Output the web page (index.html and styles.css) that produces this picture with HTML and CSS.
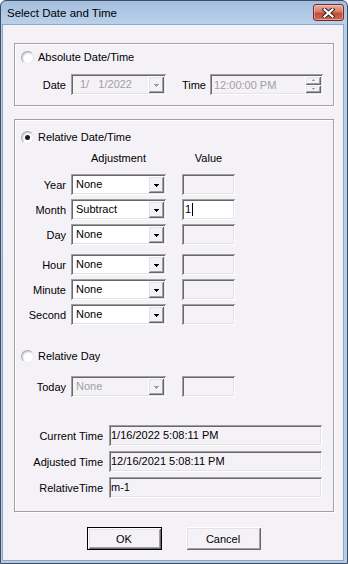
FILE: index.html
```html
<!DOCTYPE html>
<html lang="en">
<head>
    <meta charset="UTF-8">
    <meta name="viewport" content="width=device-width, initial-scale=1.0">
    <title>Select Date and Time</title>
    <link rel="stylesheet" href="styles.css">
</head>
<body>
    <div class="window">
        <div class="titlebar">
            <span class="title">Select Date and Time</span>
            <div class="close-btn">
                <svg width="13" height="10" viewBox="0 0 13 10">
                    <path d="M2.5 1.5 L10.5 8.5 M10.5 1.5 L2.5 8.5" stroke="#3a2020" stroke-width="4.2" stroke-linecap="square"/>
                    <path d="M2.5 1.5 L10.5 8.5 M10.5 1.5 L2.5 8.5" stroke="#fff" stroke-width="2.2" stroke-linecap="square"/>
                </svg>
            </div>
        </div>

        <div class="client">
            <div class="group group-absolute">
                <div class="radio-row abs-radio">
                    <span class="radio"></span>
                    <span>Absolute Date/Time</span>
                </div>
                <div class="row abs-row">
                    <span class="label">Date</span>
                    <div class="combo sunken disabled">
                        <span class="combo-text date-text">1/   1/2022</span>
                        <span class="drop-btn"><i class="arrow"></i></span>
                    </div>
                    <span class="label time-label">Time</span>
                    <div class="time-field sunken disabled">
                        <span class="time-text">12:00:00 PM</span>
                        <span class="spinner">
                            <span class="spin-btn"><i class="arrow small up"></i></span>
                            <span class="spin-btn"><i class="arrow small"></i></span>
                        </span>
                    </div>
                </div>
            </div>

            <div class="group group-relative">
                <div class="radio-row rel-radio">
                    <span class="radio checked"></span>
                    <span>Relative Date/Time</span>
                </div>

                <div class="header-row">
                    <span class="head-adjust">Adjustment</span>
                    <span class="head-value">Value</span>
                </div>

                <div class="row first-adjust">
                    <span class="label">Year</span>
                    <div class="combo sunken">
                        <span class="combo-text">None</span>
                        <span class="drop-btn"><i class="arrow"></i></span>
                    </div>
                    <div class="value sunken"></div>
                </div>
                <div class="row">
                    <span class="label">Month</span>
                    <div class="combo sunken">
                        <span class="combo-text">Subtract</span>
                        <span class="drop-btn"><i class="arrow"></i></span>
                    </div>
                    <div class="value sunken editable">1<span class="caret"></span></div>
                </div>
                <div class="row">
                    <span class="label">Day</span>
                    <div class="combo sunken">
                        <span class="combo-text">None</span>
                        <span class="drop-btn"><i class="arrow"></i></span>
                    </div>
                    <div class="value sunken"></div>
                </div>
                <div class="row time-break">
                    <span class="label">Hour</span>
                    <div class="combo sunken">
                        <span class="combo-text">None</span>
                        <span class="drop-btn"><i class="arrow"></i></span>
                    </div>
                    <div class="value sunken"></div>
                </div>
                <div class="row">
                    <span class="label">Minute</span>
                    <div class="combo sunken">
                        <span class="combo-text">None</span>
                        <span class="drop-btn"><i class="arrow"></i></span>
                    </div>
                    <div class="value sunken"></div>
                </div>
                <div class="row">
                    <span class="label">Second</span>
                    <div class="combo sunken">
                        <span class="combo-text">None</span>
                        <span class="drop-btn"><i class="arrow"></i></span>
                    </div>
                    <div class="value sunken"></div>
                </div>

                <div class="radio-row day-radio">
                    <span class="radio"></span>
                    <span>Relative Day</span>
                </div>
                <div class="row today-row">
                    <span class="label">Today</span>
                    <div class="combo sunken disabled">
                        <span class="combo-text">None</span>
                        <span class="drop-btn"><i class="arrow"></i></span>
                    </div>
                    <div class="value sunken"></div>
                </div>

                <div class="row info-row first-info">
                    <span class="label info-label">Current Time</span>
                    <div class="info sunken">1/16/2022 5:08:11 PM</div>
                </div>
                <div class="row info-row">
                    <span class="label info-label">Adjusted Time</span>
                    <div class="info sunken">12/16/2021 5:08:11 PM</div>
                </div>
                <div class="row info-row">
                    <span class="label info-label">RelativeTime</span>
                    <div class="info sunken">m-1</div>
                </div>
            </div>

            <div class="buttons">
                <div class="btn default">OK</div>
                <div class="btn">Cancel</div>
            </div>
        </div>
    </div>
</body>
</html>
```

FILE: styles.css
```css
:root {
    --face: #f5f2f7;
    --shadow: #a0a0a0;
    --dark-shadow: #696969;
    --light: #e3e3e3;
    --gray-text: #a0a0a0;
}

* {
    box-sizing: border-box;
}

body {
    margin: 0;
    font-family: "Liberation Sans", Arial, sans-serif;
    font-size: 11px;
    color: #000;
}

/* window frame */

.window {
    width: 348px;
    height: 564px;
    border: 1px solid #3c4d63;
    border-radius: 6px 6px 0 0;
    background: linear-gradient(#a3bede, #b9d0ea 22px, #b4cce8);
    padding: 0 3px 2px 1px;
    display: flex;
    flex-direction: column;
}

.titlebar {
    height: 23px;
    flex-shrink: 0;
    display: flex;
    justify-content: space-between;
    align-items: flex-start;
}

.title {
    padding: 5px 0 0 5px;
    font-size: 11.5px;
    line-height: 14px;
    color: #000;
}

.close-btn {
    width: 31px;
    height: 17px;
    margin-top: 3px;
    border: 1px solid #6a2d27;
    border-radius: 3px;
    background: linear-gradient(#e9aea2, #d77b6c 45%, #c44a38 55%, #cf6b55);
    box-shadow: inset 0 0 0 1px rgba(255, 220, 210, 0.45);
    display: flex;
    align-items: center;
    justify-content: center;
}

.client {
    flex: 1;
    background: var(--face);
    border: 1px solid #8da7c6;
}

/* group boxes */

.group {
    width: 320px;
    margin-left: 11px;
    border: 1px solid var(--shadow);
    box-shadow: inset 1px 1px 0 #fff, 1px 1px 0 #fff;
}

.group-absolute {
    margin-top: 18px;
    height: 63px;
}

.group-relative {
    margin-top: 13px;
    height: 393px;
}

.radio-row {
    height: 14px;
    padding-left: 6px;
    display: flex;
    align-items: center;
    gap: 4px;
}

.abs-radio {
    margin-top: 6px;
}

.rel-radio {
    margin-top: 10px;
}

.day-radio {
    margin-top: 24px;
}

.radio {
    width: 13px;
    height: 13px;
    border-radius: 50%;
    border: 1px solid #a8a8a8;
    border-right-color: #e4e4e4;
    border-bottom-color: #ececec;
    background: radial-gradient(circle at 65% 65%, #fff 40%, #efefef);
    box-shadow: inset 1px 1px 1px #cfcfcf;
    display: flex;
    align-items: center;
    justify-content: center;
}

.radio.checked::after {
    content: "";
    width: 5px;
    height: 5px;
    border-radius: 50%;
    background: #1c1c1c;
}

/* rows */

.row {
    height: 21px;
    margin-top: 4px;
    display: flex;
    align-items: center;
}

.abs-row {
    margin-top: 10px;
}

.first-adjust {
    margin-top: 9px;
}

.time-break {
    margin-top: 9px;
}

.today-row {
    margin-top: 13px;
}

.label {
    width: 51px;
    margin-right: 5px;
    text-align: right;
    white-space: nowrap;
}

.time-label {
    width: 40px;
    margin-right: 4px;
}

.info-label {
    width: 88px;
    margin-right: 6px;
}

.header-row {
    height: 14px;
    margin-top: 7px;
    padding-left: 56px;
    display: flex;
    align-items: center;
}

.head-adjust {
    width: 95px;
    text-align: center;
}

.head-value {
    width: 53px;
    margin-left: 16px;
    text-align: center;
}

.first-info {
    margin-top: 28px;
}

.info-row + .info-row {
    margin-top: 5px;
}

/* 3d controls */

.sunken {
    height: 21px;
    padding: 2px;
    box-shadow:
        inset 1px 1px 0 var(--shadow),
        inset -1px -1px 0 #fff,
        inset 2px 2px 0 var(--dark-shadow),
        inset -2px -2px 0 var(--light);
}

.combo {
    width: 95px;
    background: #fff;
    display: flex;
    align-items: center;
}

.combo.disabled {
    background: var(--face);
    color: var(--gray-text);
}

.combo-text {
    flex: 1;
    padding-left: 3px;
    line-height: 17px;
}

.date-text {
    padding-left: 7px;
    white-space: pre;
}

.drop-btn {
    width: 16px;
    height: 17px;
    background: var(--face);
    box-shadow:
        inset 1px 1px 0 #fff,
        inset -1px -1px 0 var(--dark-shadow),
        inset 2px 2px 0 var(--light),
        inset -2px -2px 0 var(--shadow);
    display: flex;
    align-items: center;
    justify-content: center;
    padding: 1px 0 0 0;
}

.arrow {
    --c: #000;
    display: block;
    width: 5px;
    height: 3px;
    background:
        linear-gradient(var(--c), var(--c)) 0 0 / 5px 1px no-repeat,
        linear-gradient(var(--c), var(--c)) 1px 1px / 3px 1px no-repeat,
        linear-gradient(var(--c), var(--c)) 2px 2px / 1px 1px no-repeat;
}

.disabled .arrow {
    --c: var(--gray-text);
    filter: drop-shadow(1px 1px 0 #fff);
}

.arrow.small {
    width: 3px;
    height: 2px;
    background:
        linear-gradient(var(--c), var(--c)) 0 0 / 3px 1px no-repeat,
        linear-gradient(var(--c), var(--c)) 1px 1px / 1px 1px no-repeat;
}

.arrow.small.up {
    background:
        linear-gradient(var(--c), var(--c)) 1px 0 / 1px 1px no-repeat,
        linear-gradient(var(--c), var(--c)) 0 1px / 3px 1px no-repeat;
}

.time-field {
    width: 113px;
    margin: 0;
    background: var(--face);
    color: var(--gray-text);
    display: flex;
    align-items: center;
}

.time-text {
    flex: 1;
    padding-left: 2px;
}

.spinner {
    width: 16px;
    height: 17px;
    display: flex;
    flex-direction: column;
}

.spin-btn {
    flex: 1;
    box-shadow:
        inset 1px 1px 0 #fff,
        inset -1px -1px 0 var(--dark-shadow),
        inset 2px 2px 0 var(--light),
        inset -2px -2px 0 var(--shadow);
    display: flex;
    align-items: center;
    justify-content: center;
}

.value {
    width: 53px;
    margin-left: 16px;
    background: var(--face);
    padding-left: 3px;
    line-height: 17px;
    display: flex;
    align-items: center;
}

.value.editable {
    background: #fff;
}

.caret {
    width: 1px;
    height: 13px;
    margin-left: 1px;
    background: #000;
}

.info {
    width: 213px;
    background: var(--face);
    line-height: 17px;
    white-space: nowrap;
}

/* dialog buttons */

.buttons {
    margin-top: 15px;
    display: flex;
    justify-content: center;
    gap: 24px;
    padding-left: 1px;
}

.btn {
    width: 75px;
    height: 23px;
    background: var(--face);
    box-shadow:
        inset 1px 1px 0 #fff,
        inset -1px -1px 0 var(--dark-shadow),
        inset 2px 2px 0 var(--light),
        inset -2px -2px 0 var(--shadow);
    display: flex;
    align-items: center;
    justify-content: center;
}

.btn.default {
    border: 1px solid #000;
}
```
